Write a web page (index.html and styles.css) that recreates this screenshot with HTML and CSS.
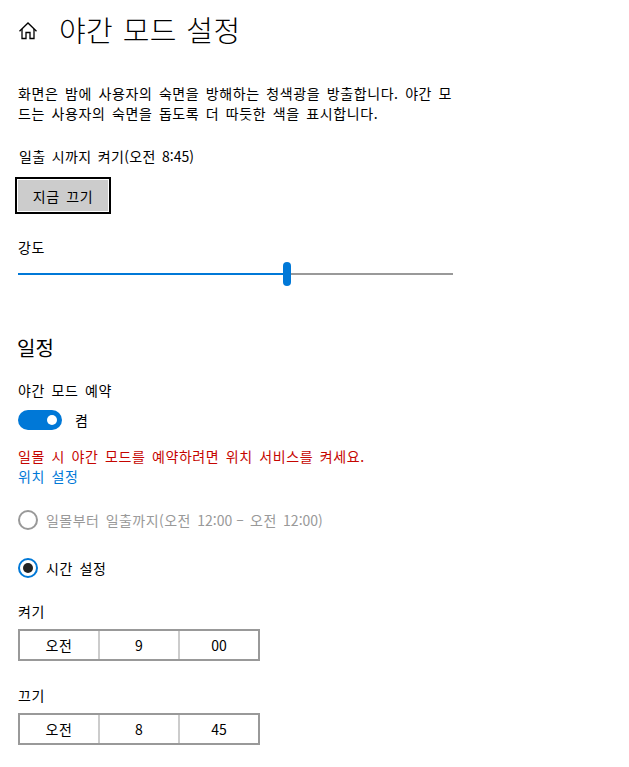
FILE: index.html
```html
<!DOCTYPE html>
<html lang="ko">
<head>
    <meta charset="UTF-8">
    <meta name="viewport" content="width=device-width, initial-scale=1.0">
    <title>야간 모드 설정</title>
    <link rel="stylesheet" href="styles.css">
</head>
<body>
    <div class="page">
        <header class="title-bar">
            <svg class="home-icon" width="18" height="18" viewBox="0 0 18 18" fill="none" stroke="#000" stroke-width="1.3">
                <path d="M.5 9.2 9 1l8.5 8.2"/>
                <path d="M3 7v9.5h4v-6h4v6h4V7"/>
            </svg>
            <h1>야간 모드 설정</h1>
        </header>

        <p class="intro">화면은 밤에 사용자의 숙면을 방해하는 청색광을 방출합니다. 야간 모드는 사용자의 숙면을 돕도록 더 따듯한 색을 표시합니다.</p>

        <p class="status">일출 시까지 켜기(오전 <span class="num">8:45</span>)</p>
        <button class="now-btn" type="button">지금 끄기</button>

        <p class="strength-label">강도</p>
        <div class="slider">
            <div class="slider-fill"></div>
            <div class="slider-thumb"></div>
            <div class="slider-rest"></div>
        </div>

        <h2>일정</h2>
        <p class="schedule-label">야간 모드 예약</p>
        <div class="toggle-row">
            <span class="toggle"><span class="toggle-dot"></span></span>
            <span>켬</span>
        </div>

        <p class="warning">일몰 시 야간 모드를 예약하려면 위치 서비스를 켜세요.</p>
        <a class="link" href="#">위치 설정</a>

        <div class="radio radio-off">
            <span class="radio-mark"></span>
            <span>일몰부터 일출까지(오전 <span class="num">12:00 –</span> 오전 <span class="num">12:00</span>)</span>
        </div>
        <div class="radio radio-on">
            <span class="radio-mark"><span class="radio-dot"></span></span>
            <span>시간 설정</span>
        </div>

        <p class="time-label first">켜기</p>
        <div class="time-box">
            <div class="time-cell">오전</div>
            <div class="time-cell num">9</div>
            <div class="time-cell num">00</div>
        </div>

        <p class="time-label">끄기</p>
        <div class="time-box">
            <div class="time-cell">오전</div>
            <div class="time-cell num">8</div>
            <div class="time-cell num">45</div>
        </div>
    </div>
</body>
</html>
```

FILE: styles.css
```css
/* Page */
body {
    margin: 0;
    background: #fff;
    color: #000;
    font-family: "Noto Sans CJK KR", "Noto Sans", sans-serif;
    font-size: 14px;
    line-height: 20px;
    letter-spacing: 0.6px;
    word-spacing: 2px;
}

p {
    margin: 0;
}

.num {
    letter-spacing: 0;
    word-spacing: 0;
}

.page {
    width: 629px;
    height: 767px;
    overflow: hidden;
    padding-left: 18px;
    box-sizing: border-box;
}

/* Title */
.title-bar {
    display: flex;
    align-items: center;
    height: 58px;
    gap: 22px;
}

.home-icon {
    margin: 4px 0 0 1px;
}

h1 {
    margin: 0;
    font-size: 29px;
    font-weight: 300;
    line-height: 40px;
    letter-spacing: 0.4px;
    word-spacing: 1px;
}

.intro {
    width: 436px;
    margin-top: 25px;
    word-break: break-all;
}

.status {
    margin-top: 23px;
    padding-left: 1px;
    letter-spacing: 0.35px;
}

/* Button */
.now-btn {
    display: block;
    width: 96px;
    height: 37px;
    margin: 11px 0 0 -3px;
    padding: 0;
    background: #ccc;
    border: 2px solid #000;
    box-shadow: inset 0 0 0 1px #fff;
    font: inherit;
    letter-spacing: inherit;
    word-spacing: inherit;
    color: #000;
}

/* Slider */
.strength-label {
    margin-top: 23px;
}

.slider {
    display: flex;
    align-items: center;
    width: 435px;
    height: 24px;
    margin-top: 5px;
}

.slider-fill {
    width: 265px;
    height: 2px;
    background: #0078d7;
}

.slider-thumb {
    width: 8px;
    height: 24px;
    border-radius: 4px;
    background: #0078d7;
}

.slider-rest {
    flex: 1;
    height: 2px;
    background: #999;
}

/* Schedule */
h2 {
    margin: 48px 0 0 -1px;
    font-size: 20px;
    font-weight: 400;
    line-height: 28px;
    letter-spacing: 0.2px;
}

.schedule-label {
    margin-top: 18px;
}

.toggle-row {
    display: flex;
    align-items: center;
    gap: 13px;
    height: 20px;
    margin-top: 10px;
}

.toggle {
    display: flex;
    align-items: center;
    justify-content: flex-end;
    width: 44px;
    height: 20px;
    padding-right: 5px;
    box-sizing: border-box;
    border-radius: 10px;
    background: #0078d7;
}

.toggle-dot {
    width: 10px;
    height: 10px;
    border-radius: 50%;
    background: #fff;
}

.warning {
    margin-top: 16px;
    color: #c50500;
}

.link {
    display: block;
    color: #0078d7;
    text-decoration: none;
}

/* Radios */
.radio {
    display: flex;
    align-items: center;
    gap: 8px;
    height: 20px;
}

.radio-mark {
    display: flex;
    align-items: center;
    justify-content: center;
    width: 20px;
    height: 20px;
    box-sizing: border-box;
    border-radius: 50%;
    border: 2px solid #000;
}

.radio-off {
    margin-top: 24px;
    color: #999;
    letter-spacing: 0.45px;
}

.radio-off .radio-mark {
    border-color: #999;
}

.radio-on {
    margin-top: 28px;
}

.radio-on .radio-mark {
    border-color: #0078d7;
}

.radio-dot {
    width: 10px;
    height: 10px;
    border-radius: 50%;
    background: #222;
}

/* Time pickers */
.time-label {
    margin-top: 24px;
}

.time-label.first {
    margin-top: 23px;
}

.time-box {
    display: flex;
    width: 242px;
    height: 32px;
    margin-top: 8px;
    box-sizing: border-box;
    border: 2px solid #999;
}

.time-cell {
    flex: 1;
    text-align: center;
    line-height: 28px;
    border-left: 2px solid #ccc;
}

.time-cell:first-child {
    border-left: none;
}
```
